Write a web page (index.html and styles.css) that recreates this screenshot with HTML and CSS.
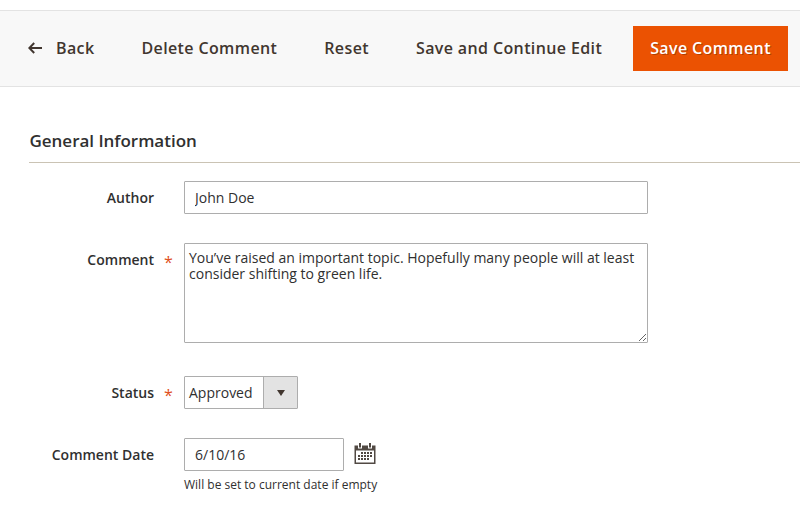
FILE: index.html
```
<!DOCTYPE html>
<html lang="en">
<head>
<meta charset="utf-8">
<title>Edit Comment</title>
<link rel="stylesheet" href="styles.css">
</head>
<body>
<header class="toolbar">
  <button class="action back" type="button"><svg class="arrow" width="16" height="14" viewBox="0 0 16 14"><path d="M14 7H1.500M6.200 2 1.300 7l4.900 5"/></svg><span>Back</span></button>
  <button class="action" type="button">Delete Comment</button>
  <button class="action" type="button">Reset</button>
  <button class="action" type="button">Save and Continue Edit</button>
  <button class="action primary" type="button">Save Comment</button>
</header>
<main class="content">
  <h1 class="legend">General Information</h1>
  <form class="fields">
    <div class="field author">
      <label class="label" for="author">Author</label>
      <input class="control wide" id="author" type="text" value="John Doe">
    </div>
    <div class="field comment">
      <label class="label required" for="comment">Comment</label>
      <textarea class="control area" id="comment" spellcheck="false">You’ve raised an important topic. Hopefully many people will at least consider shifting to green life.</textarea>
    </div>
    <div class="field status">
      <span class="label required">Status</span>
      <div class="select"><span class="value">Approved</span><span class="toggle"><svg width="8" height="6" viewBox="0 0 8 6"><path d="M0 0h8L4 6z"/></svg></span></div>
    </div>
    <div class="field">
      <label class="label" for="date">Comment Date</label>
      <div>
        <div class="date-row">
          <input class="control date" id="date" type="text" value="6/10/16">
          <svg class="calendar" width="22" height="21" viewBox="0 0 22 21">
            <path class="ink" fill-rule="evenodd" d="M.5 2.500h21V21H.5zM2 7.500v12h18v-12z"/>
            <path class="ring-gap" d="M4 0h4v5.500H4zM14 0h4v5.500h-4z"/>
            <path class="ink" d="M5 0h2v4.500H5zM15 0h2v4.500h-2z"/>
            <path class="days" d="M7 10h11.500M4 13h14.500M4 16h11"/>
          </svg>
        </div>
        <p class="note">Will be set to current date if empty</p>
      </div>
    </div>
  </form>
</main>
</body>
</html>
```
FILE: styles.css
```
* { box-sizing: border-box; }
body {
  margin: 0;
  padding-top: 10px;
  height: 511px;
  overflow: hidden;
  background: #fff;
  color: #303030;
  font: 14px/19px "Open Sans", sans-serif;
}
.toolbar {
  display: flex;
  align-items: center;
  height: 77px;
  padding: 0 12px 0 28px;
  background: #f8f8f8;
  border: solid #e3e3e3;
  border-width: 1px 0;
}
.action {
  display: flex;
  align-items: center;
  padding: 0 0 2px;
  margin-right: 47px;
  border: 0;
  background: none;
  color: #41362f;
  font: 600 16px/22px "Open Sans", sans-serif;
  letter-spacing: .38px;
  white-space: nowrap;
}
.arrow {
  margin-right: 12px;
  fill: none;
  stroke: #41362f;
  stroke-width: 2;
}
.action.primary {
  justify-content: center;
  width: 155px;
  height: 45px;
  margin: 0 0 0 auto;
  background: #eb5202;
  color: #fff;
  text-shadow: 1px 1px 0 rgba(0, 0, 0, .25);
}
.action:nth-child(4) { margin-right: 0; }
.content { padding: 41px 0 0 29px; }
.legend {
  height: 35px;
  margin: 0 0 18px;
  padding-left: .5px;
  border-bottom: 1px solid #cac3b4;
  font: 600 17px/26px "Open Sans", sans-serif;
  letter-spacing: -.02px;
}
.field { display: flex; align-items: flex-start; }
.author { margin-bottom: 29px; }
.comment { margin-bottom: 33px; }
.status { margin-bottom: 29px; }
.label {
  position: relative;
  width: 125px;
  margin-right: 30px;
  font-weight: 600;
  line-height: 33px;
  text-align: right;
}
.required::after {
  content: "*";
  position: absolute;
  left: 135px;
  top: 3px;
  color: #e04f1a;
  font-size: 16px;
  font-weight: 400;
}
.control {
  height: 33px;
  margin: 0;
  padding: 0 10px;
  border: 1px solid #adadad;
  border-radius: 1px;
  outline: 0;
  background: #fff;
  color: #303030;
  font: 14px/19px "Open Sans", sans-serif;
}
.wide { width: 464px; }
.area {
  width: 464px;
  height: 100px;
  padding: 6px 4px;
  line-height: 16px;
  resize: both;
}
.select {
  display: flex;
  width: 114px;
  height: 33px;
  border: 1px solid #adadad;
  border-radius: 1px;
  line-height: 31px;
}
.value { width: 78px; padding-left: 4px; }
.toggle {
  display: flex;
  flex: 1;
  align-items: center;
  justify-content: center;
  border-left: 1px solid #adadad;
  background: #e3e3e3;
  fill: #41362f;
}
.date-row { display: flex; align-items: center; }
.date { width: 160px; }
.calendar { margin: 0 0 2px 10px; }
.ink { fill: #514943; }
.ring-gap { fill: #fff; }
.days {
  fill: none;
  stroke: #514943;
  stroke-width: 2;
  stroke-dasharray: 2 1;
}
.note { margin: 5px 0 0; font-size: 12px; line-height: 17px; }
```
